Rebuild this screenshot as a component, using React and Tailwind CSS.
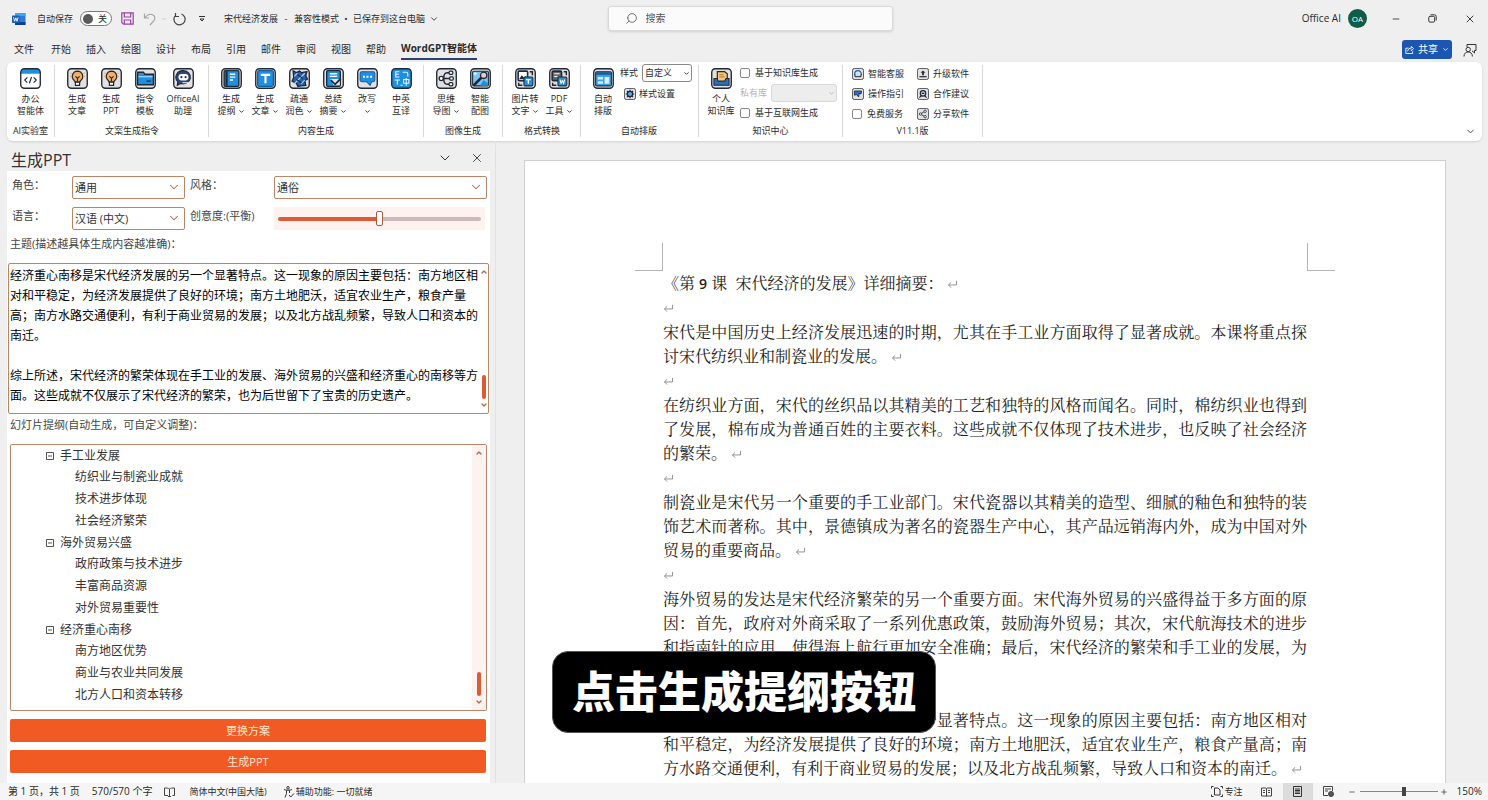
import { useState } from 'react';
import { ChevronDown, ChevronUp, Minus, Plus, Search, X } from 'lucide-react';

const INK = '#1f2937';
const BLUE = '#1f8fe0';

// Art for the 20x20 ribbon icons, drawn inside the rounded frame
const art = {
  code: (
    <>
      <path d="M1 5.5V4a3 3 0 0 1 3-3h12a3 3 0 0 1 3 3v1.500z" fill={BLUE} />
      <path d="M7 9 4.500 11.500 7 14M13 9l2.500 2.500L13 14M11 8.500 9 14.500" fill="none" stroke={INK} strokeWidth="1.1" />
    </>
  ),
  bulb: (
    <>
      <path d="M10 3a5 5 0 0 0-3.300 8.700c.8.700 1.100 1.100 1.100 1.800h4.400c0-.7.300-1.100 1.100-1.800A5 5 0 0 0 10 3z" fill="#f7b062" stroke={INK} strokeWidth="1.2" />
      <path d="M8 8l2 1.800L12 8M10 9.800V13" fill="none" stroke={INK} strokeWidth="1.1" />
      <path d="M8 13.500h4v3H8z" fill="#fff" stroke={INK} strokeWidth="1.1" />
      <path d="M3 4.500l1.500 1M17 4.500l-1.500 1M2.800 8h1.400M17.200 8h-1.400" stroke="#f7b062" strokeWidth="1.200" />
    </>
  ),
  folder: (
    <>
      <path d="M2.500 4h5.500l1.500 2h8v10h-15z" fill={BLUE} stroke={INK} strokeWidth="1.3" />
      <path d="M3.200 8.300h13.600" stroke="#9ad4ff" strokeWidth="1.200" />
      <path d="M11 12.500h4" stroke={INK} strokeWidth="1.200" />
    </>
  ),
  robot: (
    <>
      <path d="M10 2.500a7 6.300 0 0 0-5.500 10.500l-.5 3.500 3.500-1.700A7 6.300 0 1 0 10 2.500z" fill="#2c4a78" stroke={INK} strokeWidth="1" />
      <rect x="5.300" y="5.800" width="9.400" height="6" rx="3" fill="#fff" />
      <circle cx="8" cy="8.700" r="1" fill={INK} />
      <circle cx="12" cy="8.700" r="1" fill={INK} />
      <path d="M9 14h5l1 2.500" fill="none" stroke="#fff" strokeWidth="1" />
    </>
  ),
  outline: (
    <>
      <rect x="3" y="2.500" width="14" height="15" rx="1" fill={BLUE} stroke={INK} strokeWidth="1.3" />
      <path d="M5.300 3v14" stroke={INK} strokeWidth="2" />
      <path d="M8.500 6h5M8.500 8.700h5M8.500 11.400h3" stroke="#fff" strokeWidth="1.300" />
    </>
  ),
  article: (
    <>
      <rect x="2.500" y="2.500" width="15" height="15" rx="1.500" fill={BLUE} stroke="#1b5c9c" strokeWidth="1.2" />
      <path d="M5.500 6.500h9M10 6.500v8" stroke="#fff" strokeWidth="2" />
    </>
  ),
  polish: (
    <>
      <path d="M4 2.800l3 1.500L10 3l2 1.500L17 3.500l-1 4 1.500 3-2.500 1.500 1 4.500-4.500.5-3 .5-1.500-3-4-2 1.500-3.500z" fill="#2a5fb0" stroke={INK} strokeWidth="1.3" />
      <path d="M5.500 14.500 15 5M5 8l3-3M11.500 15l3.500-3.500" stroke="#9ad4ff" strokeWidth="1.100" />
      <path d="M7 11l5 3M8 6l5 4" stroke={INK} strokeWidth="1" />
    </>
  ),
  summary: (
    <>
      <rect x="3.500" y="2.500" width="13" height="15" rx="1" fill={BLUE} stroke={INK} strokeWidth="1.3" />
      <path d="M6.500 5.500h7M6.500 8h7" stroke="#fff" strokeWidth="1.3" />
      <path d="M7 10.500h9v6H10z" fill="#e8e4e4" />
      <path d="M7.500 11.500l4 4 5.500-5.500" fill="none" stroke={INK} strokeWidth="1.700" />
    </>
  ),
  rewrite: (
    <>
      <path d="M4.500 3.500h11A1.500 1.500 0 0 1 17 5v6.500a1.500 1.500 0 0 1-1.500 1.500H14l-1.500 3.500L9 13H4.500A1.500 1.500 0 0 1 3 11.500V5a1.500 1.500 0 0 1 1.500-1.500z" fill={BLUE} stroke="#1b5c9c" strokeWidth="1" />
      <path d="M5.700 8.300h1.800M9.100 8.300h1.800M12.500 8.300h1.800" stroke="#fff" strokeWidth="1.800" />
    </>
  ),
  translate: (
    <>
      <rect x="1" y="1" width="18" height="18" rx="3" fill={BLUE} />
      <path d="M8 3.500H4.500v5H8M4.500 6h3M3.500 11.500h5M6 11.500V16M11 4h3.500a1.500 1.500 0 0 1 1.500 1.500V8M9 16.500h2M12 11h5v3.500h-5zM14.500 9.500V17" fill="none" stroke="#e9f6ff" strokeWidth="1" />
    </>
  ),
  // root on the left, three branches opening to the right
  mindmap: (
    <>
      <path d="M6 10h8M13 4.500h-2a3.500 3.500 0 0 0-3.500 3.500v4a3.500 3.500 0 0 0 3.500 3.500h2" fill="none" stroke={INK} strokeWidth="1.4" />
      <circle cx="5" cy="10" r="2" fill="#fff" stroke={INK} strokeWidth="1.3" />
      <rect x="12.500" y="3" width="3.500" height="3" rx="1" fill="#fff" stroke={INK} strokeWidth="1.2" />
      <rect x="13" y="8.500" width="3.500" height="3" rx="1" fill="#fff" stroke={INK} strokeWidth="1.2" />
      <rect x="12.500" y="14" width="3.500" height="3" rx="1" fill="#fff" stroke={INK} strokeWidth="1.2" />
    </>
  ),
  picture: (
    <>
      <rect x="2.500" y="3" width="15" height="14" rx="1" fill="#7cc4f4" stroke={INK} strokeWidth="1" />
      <path d="M10 16l3-4.500 4 3V17h-7z" fill={BLUE} />
      <path d="M3.500 16.500 11 9" stroke={INK} strokeWidth="2.500" />
      <circle cx="13" cy="7" r="3" fill="#f3c9c4" stroke={INK} strokeWidth="1.200" />
      <path d="M3.500 5.500h3M5 4v3" stroke="#fff" strokeWidth="1" />
    </>
  ),
  imageText: (
    <>
      <rect x="3" y="3" width="9" height="9" rx="1" fill="#fff" stroke={INK} strokeWidth="1.500" />
      <path d="M4 10.500l2.500-3.500 2 2L10 7.500l1.500 3z" fill={INK} />
      <path d="M14 3.500h2.500V7M3.500 14v2.500H7" fill="none" stroke={INK} strokeWidth="1.400" />
      <rect x="8.500" y="8.500" width="8.500" height="8.500" rx="1" fill={BLUE} stroke={INK} strokeWidth="1" />
      <path d="M10.500 11h4.500M12.700 11v4" stroke="#fff" strokeWidth="1.200" />
    </>
  ),
  pdf: (
    <>
      <rect x="3" y="3" width="9" height="9" rx="1" fill="#666" stroke={INK} strokeWidth="1.500" />
      <path d="M5 5.500h5M5 8h3" stroke="#fff" strokeWidth="1" />
      <path d="M14 3.500h2.500V7M3.500 14v2.500H7" fill="none" stroke={INK} strokeWidth="1.400" />
      <rect x="8.500" y="8.500" width="8.500" height="8.500" rx="1" fill="#2a8fc8" stroke={INK} strokeWidth="1" />
      <path d="M10.500 11l1 3.500 1.200-2.500 1.200 2.500 1-3.500" fill="none" stroke="#fff" strokeWidth="1" />
    </>
  ),
  layout: (
    <>
      <rect x="2.500" y="3.500" width="15" height="13.500" rx="1" fill="#38a3e8" stroke={INK} strokeWidth="1" />
      <path d="M3 4h14v2.500H3z" fill="#215a94" />
      <path d="M4.500 8.500h5V11h-5zM4.500 12.500h5V15h-5zM11 8.500h4.500V15H11z" fill="#d5effc" />
    </>
  ),
  library: (
    <>
      <path d="M6 3.500h7l2.500 2V14H6z" fill="#f7c873" stroke={INK} strokeWidth="1.100" />
      <path d="M8 6.500h4M8 8.500h5" stroke="#a86a22" strokeWidth=".8" />
      <path d="M2.800 10h3l1 2.500h6.400l1-2.500h3v6.500H2.800z" fill="#2a6fb8" stroke={INK} strokeWidth="1" />
    </>
  ),
  gear: (
    <>
      <circle cx="10" cy="10" r="4.500" fill="#5aa9e6" stroke={INK} strokeWidth="2" />
      <path d="M10 3v3M10 14v3M3 10h3M14 10h3M5 5l2 2M13 13l2 2M15 5l-2 2M7 13l-2 2" stroke={INK} strokeWidth="2" />
    </>
  ),
  headset: (
    <>
      <path d="M4.500 12v-2a5.500 5.500 0 0 1 11 0v2" fill="none" stroke="#1f5fb0" strokeWidth="2" />
      <path d="M5 10.500v4h10v-4" fill="#bfe3fb" stroke={INK} strokeWidth="1.600" />
    </>
  ),
  guide: <path d="M4 5h12l-1 5-3-1-1 6-3-4-4 1z" fill="#2a6fd8" stroke={INK} strokeWidth="1.400" />,
  upgrade: (
    <>
      <path d="M10 4l4 4h-2.500v4h-3V8H6z" fill={INK} />
      <path d="M4 14.500h12" stroke={INK} strokeWidth="2" />
    </>
  ),
  team: (
    <>
      <circle cx="10" cy="9" r="4.500" fill="#c9d5e4" stroke={INK} strokeWidth="2" />
      <path d="M4 16l3.500-3.500M16 16l-3.500-3.500M8 9h4" stroke={INK} strokeWidth="1.800" />
    </>
  ),
  share: (
    <>
      <path d="M6 10l7-4.500M6 10l7 4.500" stroke={INK} strokeWidth="1.400" />
      <circle cx="6" cy="10" r="2" fill="#fff" stroke={INK} strokeWidth="1.400" />
      <circle cx="13.500" cy="5.500" r="2" fill="#fff" stroke={INK} strokeWidth="1.400" />
      <circle cx="13.500" cy="14.500" r="2" fill="#fff" stroke={INK} strokeWidth="1.400" />
    </>
  ),
};

function Icon({ name, className = 'size-[21px] shrink-0' }) {
  const fill = name === 'code' || name === 'translate' ? '#fff' : '#e4e0e0';
  return (
    <svg viewBox="0 0 20 20" className={className} aria-hidden="true">
      <rect x=".7" y=".7" width="18.600" height="18.600" rx="3.500" fill={fill} />
      {art[name]}
      <rect x=".7" y=".7" width="18.600" height="18.600" rx="3.500" fill="none" stroke={INK} strokeWidth="1.300" />
    </svg>
  );
}

function SmallIcon({ name }) {
  return <Icon name={name} className="size-3 shrink-0" />;
}

// Large ribbon button: icon with a two-line caption
function Tool({ icon, top, bottom, menu, wide }) {
  return (
    <button type="button" className={`flex flex-col items-center hover:bg-gray-100 ${wide ? 'w-[42px]' : 'w-[34px]'}`}>
      <Icon name={icon} />
      <span className="mt-1 whitespace-nowrap leading-3">{top}</span>
      <span className="flex h-3 items-center gap-[2px] whitespace-nowrap leading-3">
        {bottom}
        {menu && <ChevronDown className="size-[7px]" strokeWidth={3} />}
      </span>
    </button>
  );
}

function Group({ label, className = '', children }) {
  return (
    <section className={`flex flex-col border-r border-[#d8d8d8] ${className}`}>
      <div className="flex flex-1 pt-[3px]">{children}</div>
      <h3 className="text-center leading-3">{label}</h3>
    </section>
  );
}

function Check({ id, label }) {
  return (
    <label htmlFor={id} className="flex items-center gap-[5px] whitespace-nowrap">
      <input id={id} type="checkbox" className="size-[10px] appearance-none rounded-[2px] border border-[#888] bg-white checked:bg-[#1c56b0]" />
      {label}
    </label>
  );
}

function SideLink({ icon, label }) {
  return (
    <button type="button" className="flex items-center gap-1 whitespace-nowrap">
      <SmallIcon name={icon} />
      {label}
    </button>
  );
}

function WordLogo() {
  return (
    <svg viewBox="0 0 14 14" className="size-[14px] shrink-0" aria-hidden="true">
      <rect x="3" y="1" width="10.500" height="12" rx="1" fill="#2b7cd3" />
      <path d="M3 1h10.500v3H3z" fill="#41a5ee" />
      <path d="M3 10h10.500v3H3z" fill="#103f91" />
      <rect x="0" y="3.500" width="7.500" height="7.500" rx=".8" fill="#185abd" />
      <path d="M1.500 5.300l1.100 4 1.200-3.500L5 9.300l1.100-4" fill="none" stroke="#fff" strokeWidth=".9" />
    </svg>
  );
}

function TitleBar() {
  const [saved, setSaved] = useState(false);
  return (
    <div className="flex h-[37px] items-center pl-3 text-[9px]">
      <div className="flex flex-1 items-center whitespace-nowrap">
        <WordLogo />
        <span className="ml-[11px]">自动保存</span>
        <button
          type="button"
          role="switch"
          aria-checked={saved}
          aria-label="自动保存"
          onClick={() => setSaved(!saved)}
          className="ml-[7px] flex h-[15px] w-8 items-center justify-between rounded-full border border-[#777] bg-white pl-[2px] pr-1"
        >
          <span className="size-[10px] rounded-full bg-[#5a5a5a]" />
          关
        </button>
        <button type="button" aria-label="保存" className="ml-[9px]">
          <svg viewBox="0 0 13 13" className="size-[13px]" fill="none" stroke="#9b3fa8" strokeWidth="1.200">
            <path d="M.8.800h11.400v11.400H2.500L.8 10.500z" />
            <path d="M3.300 1v4h6.400V1M3.300 12V8h6.400v4" />
          </svg>
        </button>
        <button type="button" aria-label="撤消" className="ml-[9px] flex items-center gap-1 text-[#a6a6a6]">
          <svg viewBox="0 0 14 14" className="size-[14px]" fill="none" stroke="currentColor" strokeWidth="1.200">
            <path d="M1.500 1.500v4.500H6M1.800 5.800C4 3 7 1.500 9.700 2.800c2.600 1.300 2.800 4.200 1 6L7 13" />
          </svg>
          <ChevronDown className="size-[6px]" />
        </button>
        <button type="button" aria-label="重复" className="ml-[5px] text-[#444]">
          <svg viewBox="0 0 14 14" className="size-[14px]" fill="none" stroke="currentColor" strokeWidth="1.200">
            <path d="M3.500 1v3.500H7M3.500 3.300A5.600 5.600 0 1 0 9.500 2" />
          </svg>
        </button>
        <button type="button" aria-label="自定义快速访问工具栏" className="ml-3">
          <svg viewBox="0 0 8 8" className="size-2" fill="none" stroke="#333">
            <path d="M1 1.500h6M2 4l2 2 2-2z" />
          </svg>
        </button>
        <h1 className="ml-[18px] flex">
          宋代经济发展
          <span className="w-4 text-center">-</span>
          兼容性模式
          <span className="w-[14px] text-center">•</span>
          已保存到这台电脑
        </h1>
        <ChevronDown className="ml-1 size-[10px]" />
      </div>
      <label className="flex h-[25px] w-[285px] items-center gap-2 rounded-[3px] border border-[#d9d9d9] bg-[#fbfbfb] px-4 shadow-sm">
        <Search className="size-[13px] -scale-x-100 text-[#555]" strokeWidth={1.5} />
        <input type="text" aria-label="搜索" placeholder="搜索" className="min-w-0 flex-1 bg-transparent text-[10px] outline-none placeholder:text-[#555]" />
      </label>
      <div className="flex flex-1 items-center justify-end">
        <span className="text-[10px]">Office AI</span>
        <span className="ml-[7px] mr-[10px] flex size-[19px] items-center justify-center rounded-full bg-[#0f5c48] text-[8px] text-white">OA</span>
        <button type="button" aria-label="最小化" className="flex w-[37px] justify-center">
          <Minus className="size-[10px]" strokeWidth={2} />
        </button>
        <button type="button" aria-label="还原" className="flex w-[37px] justify-center">
          <svg viewBox="0 0 9 9" className="size-[9px]" fill="none" stroke="#333">
            <rect x=".8" y="2.300" width="5.800" height="5.800" rx="1.200" />
            <path d="M2.500.800h4A1.700 1.700 0 0 1 8.200 2.500v4" />
          </svg>
        </button>
        <button type="button" aria-label="关闭" className="flex w-[37px] justify-center">
          <X className="size-3" strokeWidth={1.8} />
        </button>
      </div>
    </div>
  );
}

const tabs = ['开始', '插入', '绘图', '设计', '布局', '引用', '邮件', '审阅', '视图', '帮助'];

function TabBar() {
  return (
    <nav className="flex h-[25px] items-center pl-[14px] pr-[11px] text-[10px]">
      <button type="button" className="mr-[17px]">文件</button>
      {tabs.map((tab) => (
        <button key={tab} type="button" className="mr-[15px]">{tab}</button>
      ))}
      <button type="button" className="h-[21px] border-b-2 border-[#2b4170] font-bold">WordGPT智能体</button>
      <button type="button" className="ml-auto flex h-[19px] w-[50px] items-center justify-center gap-1 rounded-[3px] bg-[#1c56b0] text-white">
        <svg viewBox="0 0 10 10" className="size-[9px]" fill="none" stroke="currentColor">
          <path d="M4 3.500H1v6h7.500V7M3 7c.3-2.500 2-3.500 4-3.500V1.500L9.500 4 7 6.500V5" />
        </svg>
        共享
        <ChevronDown className="size-[7px]" strokeWidth={3} />
      </button>
      <button type="button" aria-label="批注" className="ml-[11px]">
        <svg viewBox="0 0 14 14" className="size-[14px]" fill="none" stroke="#333">
          <path d="M4 4V1.500h9v6h-1.500V10L9 7.800" />
          <circle cx="5.200" cy="6.500" r="2.200" />
          <path d="M1 13.500c0-3 1.800-4.500 4.200-4.500S9.400 10.500 9.400 13.500" />
        </svg>
      </button>
    </nav>
  );
}

function Ribbon() {
  return (
    <div className="ml-[7px] mr-[6px] flex h-[79px] rounded-md bg-white pb-1 pt-[3px] text-[9px] shadow">
      <Group label="AI实验室" className="w-12">
        <div className="mx-auto">
          <Tool icon="code" top="办公" bottom="智能体" />
        </div>
      </Group>
      <Group label="文案生成指令" className="pl-[5px] pr-1">
        <Tool icon="bulb" top="生成" bottom="文章" />
        <Tool icon="bulb" top="生成" bottom="PPT" />
        <Tool icon="folder" top="指令" bottom="模板" />
        <Tool icon="robot" top="OfficeAI" bottom="助理" wide />
      </Group>
      <Group label="内容生成" className="px-[5px]">
        <Tool icon="outline" top="生成" bottom="提纲" menu />
        <Tool icon="article" top="生成" bottom="文章" menu />
        <Tool icon="polish" top="疏通" bottom="润色" menu />
        <Tool icon="summary" top="总结" bottom="摘要" menu />
        <Tool icon="rewrite" top="改写" menu />
        <Tool icon="translate" top="中英" bottom="互译" />
      </Group>
      <Group label="图像生成" className="px-[5px]">
        <Tool icon="mindmap" top="思维" bottom="导图" menu />
        <Tool icon="picture" top="智能" bottom="配图" />
      </Group>
      <Group label="格式转换" className="pl-[5px] pr-1">
        <Tool icon="imageText" top="图片转" bottom="文字" menu />
        <Tool icon="pdf" top="PDF" bottom="工具" menu />
      </Group>
      <Group label="自动排版" className="w-[118px] pl-[5px] pr-[6px]">
        <Tool icon="layout" top="自动" bottom="排版" />
        <div className="-mt-1 flex flex-1 flex-col">
          <label className="flex items-center gap-1 whitespace-nowrap">
            样式
            <span className="relative flex-1">
              <select className="h-[18px] w-full appearance-none rounded-[3px] border border-[#888] bg-white pl-[2px]">
                <option>自定义</option>
              </select>
              <ChevronDown className="pointer-events-none absolute right-[2px] top-[6px] size-[7px]" strokeWidth={3} />
            </span>
          </label>
          <button type="button" className="ml-1 flex h-6 items-center gap-[3px] whitespace-nowrap">
            <SmallIcon name="gear" />
            样式设置
          </button>
        </div>
      </Group>
      <Group label="知识中心" className="w-[144px] px-[5px]">
        <Tool icon="library" top="个人" bottom="知识库" />
        <div className="-mt-1 flex flex-1 flex-col pl-[2px]">
          <div className="flex h-[18px] items-center">
            <Check id="kb" label="基于知识库生成" />
          </div>
          <label className="mt-[2px] flex items-center gap-1 whitespace-nowrap text-[#b5b5b5]">
            私有库
            <span className="relative flex-1">
              <select disabled className="h-[18px] w-full appearance-none rounded-[3px] border border-[#d8d8d8] bg-[#ededed]">
                <option></option>
              </select>
              <ChevronDown className="pointer-events-none absolute right-[2px] top-[6px] size-[7px]" strokeWidth={3} />
            </span>
          </label>
          <div className="mt-[2px] flex h-[18px] items-center">
            <Check id="web" label="基于互联网生成" />
          </div>
        </div>
      </Group>
      <Group label="V11.1版" className="w-[140px]">
        <div className="-mt-1 ml-[9px] grid h-[60px] grid-cols-[65px_1fr] grid-rows-3">
          <SideLink icon="headset" label="智能客服" />
          <SideLink icon="upgrade" label="升级软件" />
          <SideLink icon="guide" label="操作指引" />
          <SideLink icon="team" label="合作建议" />
          <Check id="free" label="免费服务" />
          <SideLink icon="share" label="分享软件" />
        </div>
      </Group>
      <button type="button" aria-label="折叠功能区" className="ml-auto mr-[6px] self-end">
        <ChevronDown className="size-[11px]" strokeWidth={1.8} />
      </button>
    </div>
  );
}

function Field({ id, label, options }) {
  return (
    <>
      <label htmlFor={id} className="leading-[18px]">{label}</label>
      <div className="relative">
        <select id={id} className="h-[23px] w-full appearance-none rounded-[2px] border border-[#b98566] bg-white pl-[2px] pt-[2px] text-[11px] text-[#333]">
          {options.map((option) => (
            <option key={option}>{option}</option>
          ))}
        </select>
        <ChevronDown className="pointer-events-none absolute right-1 top-1 size-[14px] text-[#b0674a]" strokeWidth={1.8} />
      </div>
    </>
  );
}

function ScrollRail({ className }) {
  return (
    <div className={`flex shrink-0 flex-col items-center justify-between py-1 text-[#b0674a] ${className}`}>
      <ChevronUp className="size-2" strokeWidth={4} />
      <div className="flex flex-col items-center gap-[2px]">
        <span className="h-6 w-1 rounded-full bg-[#dc5a34]" />
        <ChevronDown className="size-2" strokeWidth={4} />
      </div>
    </div>
  );
}

const topic = `经济重心南移是宋代经济发展的另一个显著特点。这一现象的原因主要包括：南方地区相对和平稳定，为经济发展提供了良好的环境；南方土地肥沃，适宜农业生产，粮食产量高；南方水路交通便利，有利于商业贸易的发展；以及北方战乱频繁，导致人口和资本的南迁。

综上所述，宋代经济的繁荣体现在手工业的发展、海外贸易的兴盛和经济重心的南移等方面。这些成就不仅展示了宋代经济的繁荣，也为后世留下了宝贵的历史遗产。`;

const outline = [
  { title: '手工业发展', items: ['纺织业与制瓷业成就', '技术进步体现', '社会经济繁荣'] },
  { title: '海外贸易兴盛', items: ['政府政策与技术进步', '丰富商品资源', '对外贸易重要性'] },
  { title: '经济重心南移', items: ['南方地区优势', '商业与农业共同发展', '北方人口和资本转移'] },
];

function TaskPane() {
  return (
    <aside className="flex w-[496px] shrink-0 flex-col border-r border-[#e2e2e2] pl-[7px] pr-[5px]">
      <div className="flex h-[30px] items-center pl-1 pt-2 text-[#333]">
        <h2 className="flex-1 text-base leading-5">生成PPT</h2>
        <button type="button" aria-label="任务窗格选项" className="mb-1">
          <ChevronDown className="size-4" strokeWidth={1.5} />
        </button>
        <button type="button" aria-label="关闭窗格" className="mb-1 ml-[17px] mr-[6px]">
          <X className="size-[14px]" strokeWidth={1.5} />
        </button>
      </div>
      <form className="flex min-h-0 flex-1 flex-col bg-white px-[3px] pb-[10px] text-[11px] text-[#444]" onSubmit={(e) => e.preventDefault()}>
        <div className="grid grid-cols-[60px_113px_89px_1fr] gap-y-2 pl-[2px] pt-[5px] [&>label:nth-of-type(even)]:pl-[5px]">
          <Field id="role" label="角色：" options={['通用']} />
          <Field id="style" label="风格：" options={['通俗']} />
          <Field id="lang" label="语言：" options={['汉语 (中文)']} />
          <label htmlFor="creativity" className="whitespace-nowrap leading-[18px]">创意度:(平衡)</label>
          <div className="mr-[2px] flex h-[23px] items-center bg-[#fdf2ef] px-1">
            <input
              id="creativity"
              type="range"
              defaultValue="50"
              className="h-1 w-full appearance-none rounded-full bg-linear-to-r from-[#dc5a34] from-50% to-[#cbbab8] to-50% [&::-webkit-slider-thumb]:h-[15px] [&::-webkit-slider-thumb]:w-[7px] [&::-webkit-slider-thumb]:appearance-none [&::-webkit-slider-thumb]:rounded-[2px] [&::-webkit-slider-thumb]:border [&::-webkit-slider-thumb]:border-solid [&::-webkit-slider-thumb]:border-[#b0583a] [&::-webkit-slider-thumb]:bg-white"
            />
          </div>
        </div>
        <label htmlFor="topic" className="mb-2 mt-[3px] leading-[22px]">主题(描述越具体生成内容越准确)：</label>
        <div className="-mx-[2px] flex h-[151px] rounded-[2px] border border-[#b98566]">
          <textarea
            id="topic"
            defaultValue={topic}
            className="min-w-0 flex-1 resize-none overflow-hidden pl-px pt-[2px] text-xs leading-5 text-black outline-none"
          />
          <ScrollRail className="w-2" />
        </div>
        <p className="mb-2 leading-[22px]">幻灯片提纲(自动生成，可自定义调整)：</p>
        <div className="flex min-h-0 flex-1 rounded-[2px] border border-[#b98566]">
          <ul className="flex-1 overflow-hidden text-xs text-[#333]">
            {outline.map((section) => (
              <li key={section.title}>
                <div className="flex h-[21px] items-center gap-[6px] pl-[35px]">
                  <svg viewBox="0 0 8 8" className="size-2" fill="none" stroke="#555">
                    <path d="M.5.500h7v7h-7zM2 4h4" />
                  </svg>
                  {section.title}
                </div>
                <ul className="pl-16 leading-[22px]">
                  {section.items.map((item) => (
                    <li key={item}>{item}</li>
                  ))}
                </ul>
              </li>
            ))}
          </ul>
          <ScrollRail className="w-[14px] bg-[#fdf2ef]" />
        </div>
        <button type="submit" className="mr-px mt-2 h-[23px] shrink-0 rounded-[2px] bg-[#f15a22] pt-[2px] text-[#ffe6cf]">更换方案</button>
        <button type="submit" className="mr-px mt-2 h-[23px] shrink-0 rounded-[2px] bg-[#f15a22] pt-[2px] text-[#ffe6cf]">生成PPT</button>
      </form>
    </aside>
  );
}

function ReturnMark() {
  return (
    <svg viewBox="0 0 12 10" className="ml-1 inline-block h-[9px] w-[11px]" fill="none" stroke="#888" aria-hidden="true">
      <path d="M10.500 1v4.500h-9M4.500 2.500l-3 3 3 3" />
    </svg>
  );
}

const paragraphs = [
  '宋代是中国历史上经济发展迅速的时期，尤其在手工业方面取得了显著成就。本课将重点探讨宋代纺织业和制瓷业的发展。',
  '在纺织业方面，宋代的丝织品以其精美的工艺和独特的风格而闻名。同时，棉纺织业也得到了发展，棉布成为普通百姓的主要衣料。这些成就不仅体现了技术进步，也反映了社会经济的繁荣。',
  '制瓷业是宋代另一个重要的手工业部门。宋代瓷器以其精美的造型、细腻的釉色和独特的装饰艺术而著称。其中，景德镇成为著名的瓷器生产中心，其产品远销海内外，成为中国对外贸易的重要商品。',
  '海外贸易的发达是宋代经济繁荣的另一个重要方面。宋代海外贸易的兴盛得益于多方面的原因：首先，政府对外商采取了一系列优惠政策，鼓励海外贸易；其次，宋代航海技术的进步和指南针的应用，使得海上航行更加安全准确；最后，宋代经济的繁荣和手工业的发展，为海外贸易提供了物质基础。',
  '经济重心南移是宋代经济发展的另一个显著特点。这一现象的原因主要包括：南方地区相对和平稳定，为经济发展提供了良好的环境；南方土地肥沃，适宜农业生产，粮食产量高；南方水路交通便利，有利于商业贸易的发展；以及北方战乱频繁，导致人口和资本的南迁。',
];

function DocumentView() {
  return (
    <main className="relative flex min-w-0 flex-1 overflow-hidden pl-7 pr-[42px] pt-[19px]">
      <article className="min-w-0 flex-1 border border-b-0 border-[#cfcfcf] bg-white pt-[82px] text-[#222]">
        <div className="flex justify-between px-[110px]">
          <span className="size-7 border-b border-r border-[#b5b5b5]" />
          <span className="size-7 border-b border-l border-[#b5b5b5]" />
        </div>
        <div className="px-[138px] text-justify font-['Noto_Serif_CJK_SC','Noto_Sans_CJK_SC',serif] text-base leading-6">
          <p className="whitespace-pre">
            《第 <span className="font-['Open_Sans'] text-sm font-semibold">9</span> 课  宋代经济的发展》详细摘要：<ReturnMark />
          </p>
          {paragraphs.map((text) => (
            <div key={text}>
              <p className="-ml-1 h-[25px]"><ReturnMark /></p>
              <p>{text}<ReturnMark /></p>
            </div>
          ))}
        </div>
      </article>
      <p className="absolute bottom-[50px] left-14 whitespace-nowrap rounded-2xl border border-[#555] bg-black px-[19px] text-[43px] font-black leading-20 text-white">
        点击生成提纲按钮
      </p>
    </main>
  );
}

function StatusBar() {
  return (
    <footer className="flex h-[17px] shrink-0 items-center whitespace-nowrap bg-[#f5f5f5] pl-2 pr-[6px] text-[9px]">
      <span className="text-[10px]">第 1 页，共 1 页</span>
      <span className="ml-3 text-[10px]">570/570 个字</span>
      <svg viewBox="0 0 11 10" className="ml-3 h-[10px] w-[11px]" fill="none" stroke="#444">
        <path d="M5.500 2v7.500M5.500 2C4.500 1 2.500 1 .500 1v7.500h3.500M5.500 2c1-1 3-1 5-1v7.500h-2M4 9.500h3" />
      </svg>
      <span className="ml-[14px]">简体中文(中国大陆)</span>
      <svg viewBox="0 0 12 12" className="ml-4 size-3" fill="none" stroke="#333">
        <circle cx="5" cy="1.800" r="1.300" />
        <path d="M1 3.500c2 1 6 1 8 0M3.500 4.500v3l-1.500 4M6.500 4.500V7M6 9l1.800 2L11 7.500" />
      </svg>
      <span className="ml-px">辅助功能: 一切就绪</span>
      <button type="button" className="ml-auto flex items-center gap-[2px]">
        <svg viewBox="0 0 12 11" className="h-[11px] w-3" fill="none" stroke="#333">
          <path d="M2.500.500h-2v2M.500 8.500v2h2M9.500.500h2v2M11.500 8.500v2h-2M3.500 2h3.500l2 2v5h-5.500z" />
        </svg>
        专注
      </button>
      <button type="button" aria-label="阅读视图" className="ml-[18px]">
        <svg viewBox="0 0 11 10" className="h-[10px] w-[11px]" fill="none" stroke="#444">
          <path d="M5.500 1.500v8M.500 1h4.500l.5.500.5-.5h4.500v8H.500zM2 3.500h2M2 5.500h2M7 3.500h2M7 5.500h2" />
        </svg>
      </button>
      <button type="button" aria-label="页面视图" className="ml-[11px] flex h-[17px] w-[30px] items-center justify-center bg-[#dcdcdc]">
        <svg viewBox="0 0 9 11" className="h-[11px] w-[9px]" fill="none" stroke="#333">
          <path d="M.500.500h8v10h-8zM2 3h5M2 4.500h5M2 6h5M2 7.500h5" />
        </svg>
      </button>
      <button type="button" aria-label="Web 版式视图" className="ml-[10px]">
        <svg viewBox="0 0 11 11" className="size-[11px]" fill="none" stroke="#444">
          <path d="M5 9.500H.500v-9h9V5M2 3h6M2 5h3" />
          <circle cx="8" cy="8" r="2.500" fill="#555" />
        </svg>
      </button>
      <Minus className="ml-[14px] size-2" />
      <input
        type="range"
        aria-label="缩放"
        defaultValue="57"
        className="ml-1 h-px w-[78px] appearance-none bg-[#888] [&::-webkit-slider-thumb]:h-[9px] [&::-webkit-slider-thumb]:w-1 [&::-webkit-slider-thumb]:appearance-none [&::-webkit-slider-thumb]:bg-[#444]"
      />
      <Plus className="ml-[2px] size-2" />
      <span className="ml-[9px] text-[10px]">150%</span>
    </footer>
  );
}

export default function App() {
  return (
    <div className="flex h-screen flex-col overflow-hidden bg-[#efefef] font-['Open_Sans','Noto_Sans_CJK_SC',sans-serif] text-[#2b2b2b]">
      <header className="shrink-0">
        <TitleBar />
        <TabBar />
        <Ribbon />
      </header>
      <div className="flex min-h-0 flex-1">
        <TaskPane />
        <DocumentView />
      </div>
      <StatusBar />
    </div>
  );
}
